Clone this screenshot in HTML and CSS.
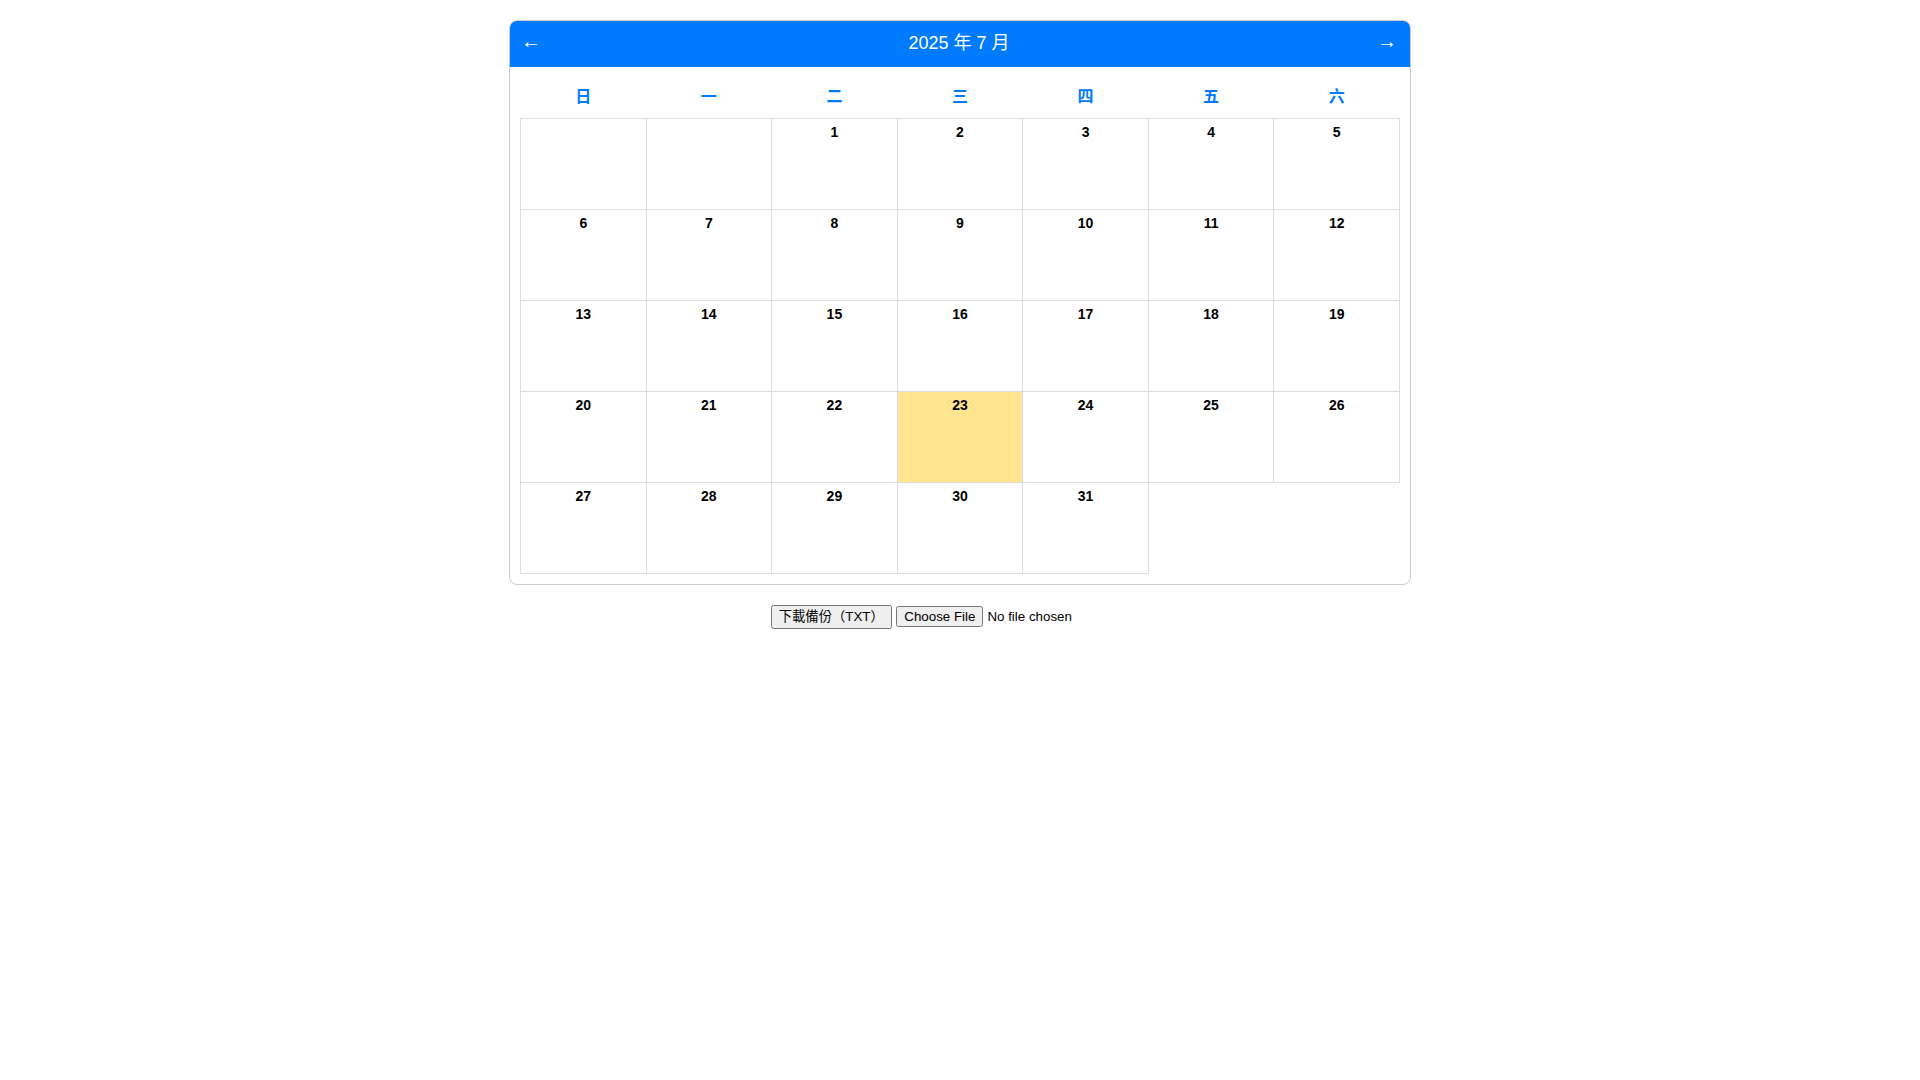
FILE: index.html
```html
<!DOCTYPE html>
<html lang="zh-Hant">
<head>
<meta charset="utf-8">
<title>行事曆</title>
<link rel="stylesheet" href="styles.css">
</head>
<body>
<div class="calendar">
  <div class="cal-header">
    <span class="nav">←</span>
    <span class="title">2025 年 7 月</span>
    <span class="nav">→</span>
  </div>
  <div class="cal-body">
    <table class="grid">
      <thead>
        <tr><th>日</th><th>一</th><th>二</th><th>三</th><th>四</th><th>五</th><th>六</th></tr>
      </thead>
      <tbody>
        <tr><td></td><td></td><td><div class="num">1</div></td><td><div class="num">2</div></td><td><div class="num">3</div></td><td><div class="num">4</div></td><td><div class="num">5</div></td></tr>
        <tr><td><div class="num">6</div></td><td><div class="num">7</div></td><td><div class="num">8</div></td><td><div class="num">9</div></td><td><div class="num">10</div></td><td><div class="num">11</div></td><td><div class="num">12</div></td></tr>
        <tr><td><div class="num">13</div></td><td><div class="num">14</div></td><td><div class="num">15</div></td><td><div class="num">16</div></td><td><div class="num">17</div></td><td><div class="num">18</div></td><td><div class="num">19</div></td></tr>
        <tr><td><div class="num">20</div></td><td><div class="num">21</div></td><td><div class="num">22</div></td><td class="today"><div class="num">23</div></td><td><div class="num">24</div></td><td><div class="num">25</div></td><td><div class="num">26</div></td></tr>
        <tr><td><div class="num">27</div></td><td><div class="num">28</div></td><td><div class="num">29</div></td><td><div class="num">30</div></td><td><div class="num">31</div></td></tr>
      </tbody>
    </table>
  </div>
</div>
<div class="actions">
  <button type="button" class="btn">下載備份（TXT）</button>
  <input type="file" class="file">
</div>
</body>
</html>
```

FILE: styles.css
```css
html, body {
  margin: 0;
  padding: 0;
  background: #fff;
}
body {
  padding-top: 20px;
  font-family: "Liberation Sans", "Noto Sans CJK TC", sans-serif;
  color: #000;
}
.calendar {
  width: 900px;
  margin: 0 auto;
  border: 1px solid #ccc;
  border-radius: 8px;
  background: #fff;
}
.cal-header {
  height: 46px;
  box-sizing: border-box;
  background: #007bff;
  color: #fff;
  border-radius: 7px 7px 0 0;
  display: flex;
  align-items: center;
  justify-content: space-between;
  padding: 0 13px 2px 11px;
  font-size: 18px;
}
.nav {
  font-size: 20px;
  line-height: 1;
  margin-bottom: 4px;
}
.title {
  font-size: 18px;
  line-height: 22px;
}
.cal-body {
  padding: 0 10px 10px;
}
.grid {
  width: 880px;
  border-collapse: collapse;
  table-layout: fixed;
}
.grid th {
  color: #007bff;
  font-size: 16px;
  font-weight: bold;
  line-height: 20px;
  height: 20px;
  padding: 20px 0 11px;
  text-align: center;
}
.grid td {
  border: 1px solid #ddd;
  height: 80px;
  padding: 5px;
  vertical-align: top;
  text-align: center;
}
.grid td.today {
  background: #ffe58f;
}
.num {
  font-size: 14px;
  font-weight: bold;
  line-height: 16px;
}
.actions {
  margin-top: 20px;
  text-align: center;
}
.btn, .file {
  font-family: "Liberation Sans", "Noto Sans CJK TC", sans-serif;
  font-size: 13.333px;
}
.btn {
  line-height: 18px;
}
```
